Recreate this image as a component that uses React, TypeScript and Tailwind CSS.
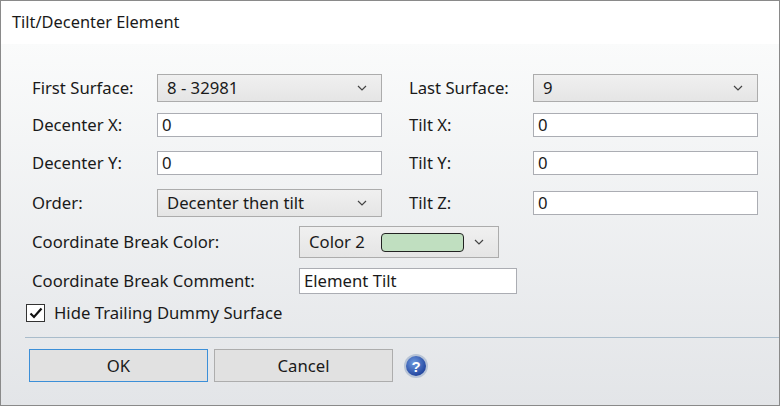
import React from 'react';

const Chevron = () => (
  <svg width="10" height="6" viewBox="0 0 10 6" className="absolute right-[14px] top-1/2 -translate-y-1/2">
    <path d="M1 1l4 4 4-4" fill="none" stroke="#444" strokeWidth="1.2" />
  </svg>
);

const Select = ({ value, w = 'w-[225px]' }: { value: string; w?: string }) => (
  <div className={`relative ${w} h-[28px] border border-[#acacac] bg-gradient-to-b from-[#f0f0f0] to-[#e5e5e5] flex items-center pl-[9px]`}>
    {value}
    <Chevron />
  </div>
);

const Input = ({ value, w = 'w-[225px]', h = 'h-[24px]' }: { value: string; w?: string; h?: string }) => (
  <div className={`${w} ${h} border border-[#abadb3] bg-white flex items-center pl-[4px]`}>{value}</div>
);

const Row = ({ l1, c1, l2, c2, mt, h }: { l1: string; c1: React.ReactNode; l2: string; c2: React.ReactNode; mt: string; h: string }) => (
  <div className={`flex items-center ${mt} ${h}`}>
    <div className="w-[125px]">{l1}</div>
    {c1}
    <div className="w-[124px] ml-[27px]">{l2}</div>
    {c2}
  </div>
);

export default function App() {
  return (
    <div className="w-[780px] h-[406px] border border-[#8a8a8a] text-[16.7px] text-[#1a1a1a] overflow-hidden flex flex-col" style={{ fontFamily: '"Segoe UI", "Noto Sans", sans-serif' }}>
      <div className="h-[43px] bg-white flex items-center pl-[11px] text-[16.4px] shrink-0">Tilt/Decenter Element</div>
      <div className="flex-1 bg-gradient-to-b from-[#fafbfb] to-[#e3e5e8] pl-[31px] pt-[30px]">
        <Row mt="" h="h-[28px]" l1="First Surface:" c1={<Select value="8 - 32981" />} l2="Last Surface:" c2={<Select value="9" />} />
        <Row mt="mt-[11px]" h="h-[24px]" l1="Decenter X:" c1={<Input value="0" />} l2="Tilt X:" c2={<Input value="0" />} />
        <Row mt="mt-[14px]" h="h-[24px]" l1="Decenter Y:" c1={<Input value="0" />} l2="Tilt Y:" c2={<Input value="0" />} />
        <Row mt="mt-[14px]" h="h-[28px]" l1="Order:" c1={<Select value="Decenter then tilt" />} l2="Tilt Z:" c2={<Input value="0" />} />
        <div className="flex items-center mt-[9px] h-[32px]">
          <div className="w-[267px]">Coordinate Break Color:</div>
          <div className="relative w-[200px] h-[32px] border border-[#acacac] bg-gradient-to-b from-[#f0f0f0] to-[#e5e5e5] flex items-center pl-[9px]">
            Color 2
            <div className="ml-[16px] w-[83px] h-[19px] rounded-[4px] border border-[#222] bg-[#c0dfc0]" />
            <Chevron />
          </div>
        </div>
        <div className="flex items-center mt-[10px] h-[26px]">
          <div className="w-[267px]">Coordinate Break Comment:</div>
          <Input value="Element Tilt" w="w-[218px]" h="h-[26px]" />
        </div>
        <div className="flex items-center mt-[10px] h-[18px] -ml-[6px]">
          <div className="w-[19px] h-[18px] border border-[#333] bg-white flex items-center justify-center">
            <svg width="14" height="12" viewBox="0 0 14 12"><path d="M1.5 6.5l3.5 3.5 7.5-8.5" fill="none" stroke="#111" strokeWidth="2.2" /></svg>
          </div>
          <div className="ml-[9px]">Hide Trailing Dummy Surface</div>
        </div>
        <div className="mt-[15px] -ml-[7px] h-px bg-[#a9bccb]" />
        <div className="flex items-center mt-[11px] -ml-[3px] gap-[6px]">
          <div className="w-[179px] h-[33px] border border-[#3c8fd8] bg-[#e1e1e1] flex items-center justify-center">OK</div>
          <div className="w-[179px] h-[33px] border border-[#adadad] bg-[#e1e1e1] flex items-center justify-center">Cancel</div>
          <svg width="26" height="26" viewBox="0 0 26 26" className="ml-[4px]">
            <defs>
              <radialGradient id="hg" cx="40%" cy="35%" r="70%">
                <stop offset="0" stopColor="#6f9be0" />
                <stop offset="1" stopColor="#1d3f9a" />
              </radialGradient>
            </defs>
            <circle cx="13" cy="13" r="12" fill="#b8c4d6" />
            <circle cx="13" cy="13" r="10" fill="url(#hg)" />
            <text x="13" y="18.5" textAnchor="middle" fontSize="15" fontWeight="bold" fill="white" fontFamily="Liberation Sans, sans-serif">?</text>
          </svg>
        </div>
      </div>
    </div>
  );
}
